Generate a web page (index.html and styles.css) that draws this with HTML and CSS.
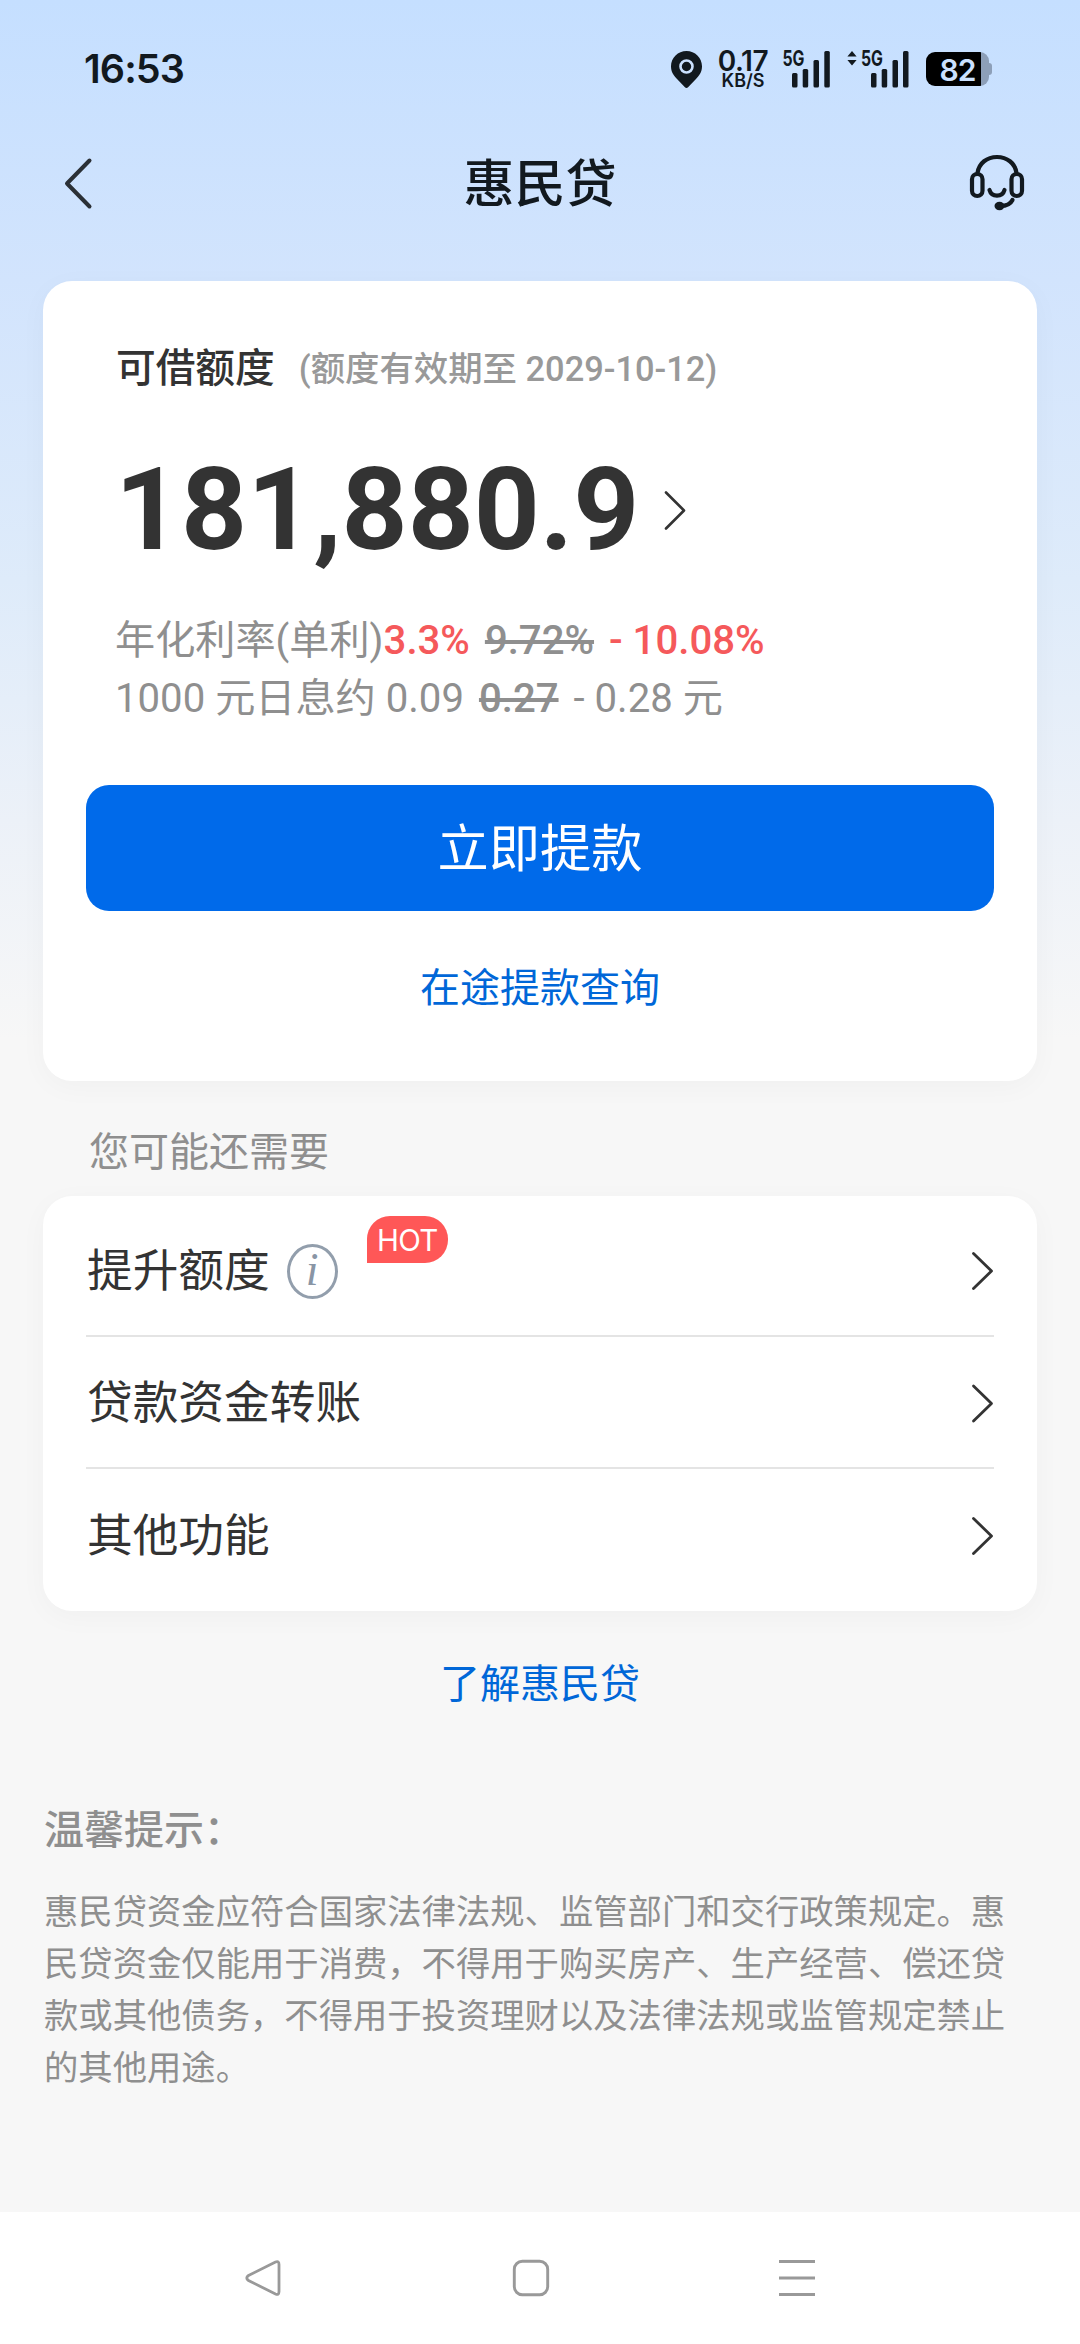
FILE: index.html
```html
<!DOCTYPE html>
<html lang="zh-CN">
<head>
<meta charset="utf-8">
<title>惠民贷</title>
<link rel="stylesheet" href="styles.css">
</head>
<body>
<div class="screen">
  <header class="status">
    <span class="clock">16:53</span>
    <div class="indicators">
      <svg class="pin" width="31" height="37" viewBox="0 0 31 37"><path d="M15.500 0C7 0 0 6.700 0 15.300c0 5.700 2.600 9.300 6.500 13.200l7.200 7.600q1.800 1.800 3.600 0l7.200-7.600C28.400 24.600 31 21 31 15.300 31 6.700 24 0 15.500 0z" fill="#12191f"/><circle cx="15.500" cy="15.500" r="6" fill="none" stroke="#cbe1ff" stroke-width="2.600"/></svg>
      <div class="speed"><span class="speed-value">0.17</span><span class="speed-unit">KB/S</span></div>
      <svg class="signal" width="48" height="50" viewBox="0 -6 48 50"><text class="net" x="0.500" y="15.500" textLength="22" lengthAdjust="spacingAndGlyphs">5G</text><g fill="#12191f"><rect x="10" y="23" width="5.500" height="14.500" rx="1.500"/><rect x="20.700" y="19" width="5.500" height="18.500" rx="1.500"/><rect x="31.500" y="10" width="5.500" height="27.500" rx="1.500"/><rect x="42.300" y="1" width="5.500" height="36.500" rx="1.500"/></g></svg>
      <svg class="signal-two" width="62" height="50" viewBox="0 -6 62 50"><path d="M5 1l4.600 5.500H.4zM5 15.500L.4 10h9.200z" fill="#12191f"/><text class="net" x="14" y="15.500" textLength="22" lengthAdjust="spacingAndGlyphs">5G</text><g fill="#12191f"><rect x="24" y="23" width="5.500" height="14.500" rx="1.500"/><rect x="34.700" y="19" width="5.500" height="18.500" rx="1.500"/><rect x="45.500" y="10" width="5.500" height="27.500" rx="1.500"/><rect x="56" y="1" width="5.500" height="36.500" rx="1.500"/></g></svg>
      <div class="battery"><span class="battery-level">82</span></div>
    </div>
  </header>

  <nav class="titlebar">
    <svg class="back" width="32" height="54" viewBox="0 0 32 54"><path d="M28.500 4.500L6 27.500l22.500 23" fill="none" stroke="#2b3036" stroke-width="4" stroke-linecap="round" stroke-linejoin="round"/></svg>
    <h1 class="title">惠民贷</h1>
    <svg class="headset" width="56" height="58" viewBox="0 0 56 58"><g fill="none" stroke="#12191f" stroke-width="4.200" stroke-linecap="round"><path d="M8.500 19C10 9 18 3 28 3s18 6 19.500 16"/><rect x="3" y="20" width="10.500" height="22" rx="5.250"/><rect x="42.500" y="20" width="10.500" height="22" rx="5.250"/><path d="M20.500 36c2 7.500 13 7.500 15 0M43.500 46c-2 4-6 6-12 6"/></g><ellipse cx="30.500" cy="52" rx="5" ry="4.200" fill="#12191f"/></svg>
  </nav>

  <main class="content">
    <section class="card quota">
      <div class="quota-head"><span class="quota-label">可借额度</span><span class="quota-valid">(额度有效期至 2029-10-12)</span></div>
      <div class="amount"><span class="amount-value">181,880.9</span><svg width="24" height="42" viewBox="0 0 24 42"><path d="M3 3.500l18 18L3 39.500" fill="none" stroke="#333" stroke-width="2.600" stroke-linecap="round" stroke-linejoin="round"/></svg></div>
      <div class="rates">
        <p class="rate-line">年化利率(单利)<b class="red">3.3%</b> <s class="old">9.72%</s> <b class="red">- 10.08%</b></p>
        <p class="rate-line">1000 元日息约 0.09 <s class="old">0.27</s> - 0.28 元</p>
      </div>
      <div class="primary">立即提款</div>
      <a class="link pending">在途提款查询</a>
    </section>

    <h2 class="section-title">您可能还需要</h2>
    <section class="card menu">
      <div class="row">
        <span class="row-text">提升额度</span>
        <span class="info">i</span>
        <span class="hot">HOT</span>
        <svg class="chev" width="24" height="42" viewBox="0 0 24 42"><path d="M3.500 4.500L21.500 22l-18 17.500" fill="none" stroke="#333" stroke-width="2.800" stroke-linecap="round" stroke-linejoin="round"/></svg>
      </div>
      <div class="row">
        <span class="row-text">贷款资金转账</span>
        <svg class="chev" width="24" height="42" viewBox="0 0 24 42"><path d="M3.500 5L21.500 22.500l-18 17.500" fill="none" stroke="#333" stroke-width="2.800" stroke-linecap="round" stroke-linejoin="round"/></svg>
      </div>
      <div class="row">
        <span class="row-text">其他功能</span>
        <svg class="chev" width="24" height="42" viewBox="0 0 24 42"><path d="M3.500 4.500L21.500 22l-18 17.500" fill="none" stroke="#333" stroke-width="2.800" stroke-linecap="round" stroke-linejoin="round"/></svg>
      </div>
    </section>
    <a class="link about">了解惠民贷</a>

    <section class="tips">
      <h3 class="tips-title">温馨提示：</h3>
      <p class="tips-text">惠民贷资金应符合国家法律法规、监管部门和交行政策规定。惠民贷资金仅能用于消费，不得用于购买房产、生产经营、偿还贷款或其他债务，不得用于投资理财以及法律法规或监管规定禁止的其他用途。</p>
    </section>
  </main>

  <footer class="sysnav">
    <svg width="38" height="40" viewBox="0 0 38 40"><path d="M4.500 17.500L31.500 4q3.500-1.500 3.500 2.500v27q0 4-3.500 2.500L4.500 22.500q-3.500-2.500 0-5z" fill="none" stroke="#999" stroke-width="2.800"/></svg>
    <svg width="38" height="38" viewBox="0 0 38 38"><rect x="2.300" y="2.300" width="33.400" height="33.400" rx="8" fill="none" stroke="#999" stroke-width="2.900"/></svg>
    <svg width="36" height="38" viewBox="0 0 36 38"><path d="M0 2.500h36M0 19h36M0 35.500h36" stroke="#999" stroke-width="3.200"/></svg>
  </footer>
</div>
</body>
</html>
```
FILE: styles.css
```css
* { box-sizing: border-box; margin: 0; padding: 0; }

body {
  width: 1080px;
  font-family: Roboto, "Noto Sans CJK SC", sans-serif;
  font-size: 40px;
  font-weight: 400;
  color: #333;
}

.screen {
  display: flex;
  flex-direction: column;
  height: 2344px;
  background: linear-gradient(180deg, #c5dfff 0, #d2e4fd 280px, #deebfa 580px, #ecf1f8 820px, #f7f7f7 1040px);
}

svg { display: block; flex: none; }

/* status bar */
.status {
  display: flex;
  justify-content: space-between;
  align-items: center;
  height: 138px;
  padding: 0 88px 0 84px;
}
.clock {
  padding-top: 1px;
  font: 600 39.500px/1 Inter, sans-serif;
  letter-spacing: -0.9px;
  color: #12191f;
}
.indicators { display: flex; align-items: center; }
.speed {
  display: flex;
  flex-direction: column;
  align-items: center;
  width: 52px;
  margin: 0 13px 0 15px;
  font-family: Inter, sans-serif;
  font-weight: 600;
  color: #12191f;
}
.speed-value { font-size: 28px; line-height: 22px; letter-spacing: -0.4px; }
.speed-unit { font-size: 18px; line-height: 17px; }
.net { font: 700 21.500px Inter, sans-serif; fill: #12191f; }
.signal-two { margin-left: 17px; }
.battery {
  position: relative;
  width: 63px;
  height: 34px;
  margin: 0 3px 0 17px;
  border-radius: 9px;
  background: linear-gradient(90deg, #000 55px, #8d9fb8 55px);
  text-align: center;
}
.battery::after {
  content: "";
  position: absolute;
  left: 63px;
  top: 11px;
  width: 3px;
  height: 12px;
  border-radius: 0 3px 3px 0;
  background: #8d9fb8;
}
.battery-level {
  display: block;
  font: 600 30px/36px Inter, sans-serif;
  letter-spacing: -1px;
  color: #cbe1ff;
}

/* title bar */
.titlebar {
  display: flex;
  justify-content: space-between;
  align-items: center;
  height: 90px;
  padding: 0 55px 0 61px;
}
.title { font-size: 51px; font-weight: 500; line-height: 90px; color: #12191f; padding: 4px 0 0 18px; }

/* cards */
.content { flex: 1; padding: 53px 43px 0; }
.card {
  border-radius: 29px;
  background: #fff;
  box-shadow: 0 6px 29px rgba(0, 0, 0, 0.03);
}
.quota { height: 800px; padding: 54px 43px 0; }
.quota-head { display: flex; align-items: center; height: 58px; padding-left: 30px; gap: 24px; }
.quota-label { font-size: 39.700px; font-weight: 500; }
.quota-valid { padding-top: 3px; font-size: 34.400px; font-weight: 500; color: #999; }
.amount { display: flex; align-items: center; height: 150px; margin-top: 42px; padding-left: 29px; gap: 24px; }
.amount-value { font-size: 115.200px; font-weight: 700; line-height: 150px; }
.rates { margin-top: 27px; padding-left: 29px; }
.rate-line { font-size: 40.150px; line-height: 57.600px; color: #8f8f8f; white-space: nowrap; }
.red { font-weight: 500; color: #f5595b; }
.old { margin: 0 5px; font-weight: 500; }
.primary {
  height: 126px;
  margin-top: 58px;
  padding-top: 2px;
  border-radius: 23px;
  background: #006aea;
  font-size: 51.200px;
  line-height: 126px;
  text-align: center;
  color: #fff;
}
.link { display: block; text-align: center; line-height: 58px; color: #0067d8; }
.pending { margin-top: 49px; }

.section-title {
  height: 115px;
  padding: 43px 0 0 46px;
  font-size: 40px;
  font-weight: 400;
  line-height: 58px;
  color: #8f8f8f;
}
.menu { height: 415px; padding: 9px 43px 0; }
.row { display: flex; align-items: center; height: 132px; border-bottom: 2px solid #e4e4e4; }
.row:last-child { border-bottom: 0; }
.row-text { padding: 0 0 7px 1px; font-size: 45.700px; }
.chev { margin-left: auto; }
.info {
  width: 51px;
  height: 55px;
  margin: 2px 0 0 17px;
  border: 3.500px solid #929eac;
  border-radius: 50%;
  font: italic 400 46px/46px "Liberation Serif", serif;
  text-align: center;
  color: #8995a5;
}
.hot {
  align-self: flex-start;
  width: 81px;
  height: 47px;
  margin: 11px 0 0 29px;
  border-radius: 23px 23px 23px 0;
  background: #ff5757;
  font: 400 29.500px/49px Inter, sans-serif;
  letter-spacing: -0.7px;
  text-align: center;
  color: #fff;
}
.about { margin-top: 45px; }

/* tips */
.tips { margin-top: 88px; padding-left: 1px; color: #8f8f8f; }
.tips-title { font-size: 40px; font-weight: 500; line-height: 58px; }
.tips-text { margin-top: 27px; font-size: 34.350px; line-height: 51.840px; }

/* system navigation */
.sysnav {
  display: flex;
  align-items: center;
  justify-content: space-between;
  height: 132px;
  padding: 0 265px 0 244px;
  background: #fff;
}
```
